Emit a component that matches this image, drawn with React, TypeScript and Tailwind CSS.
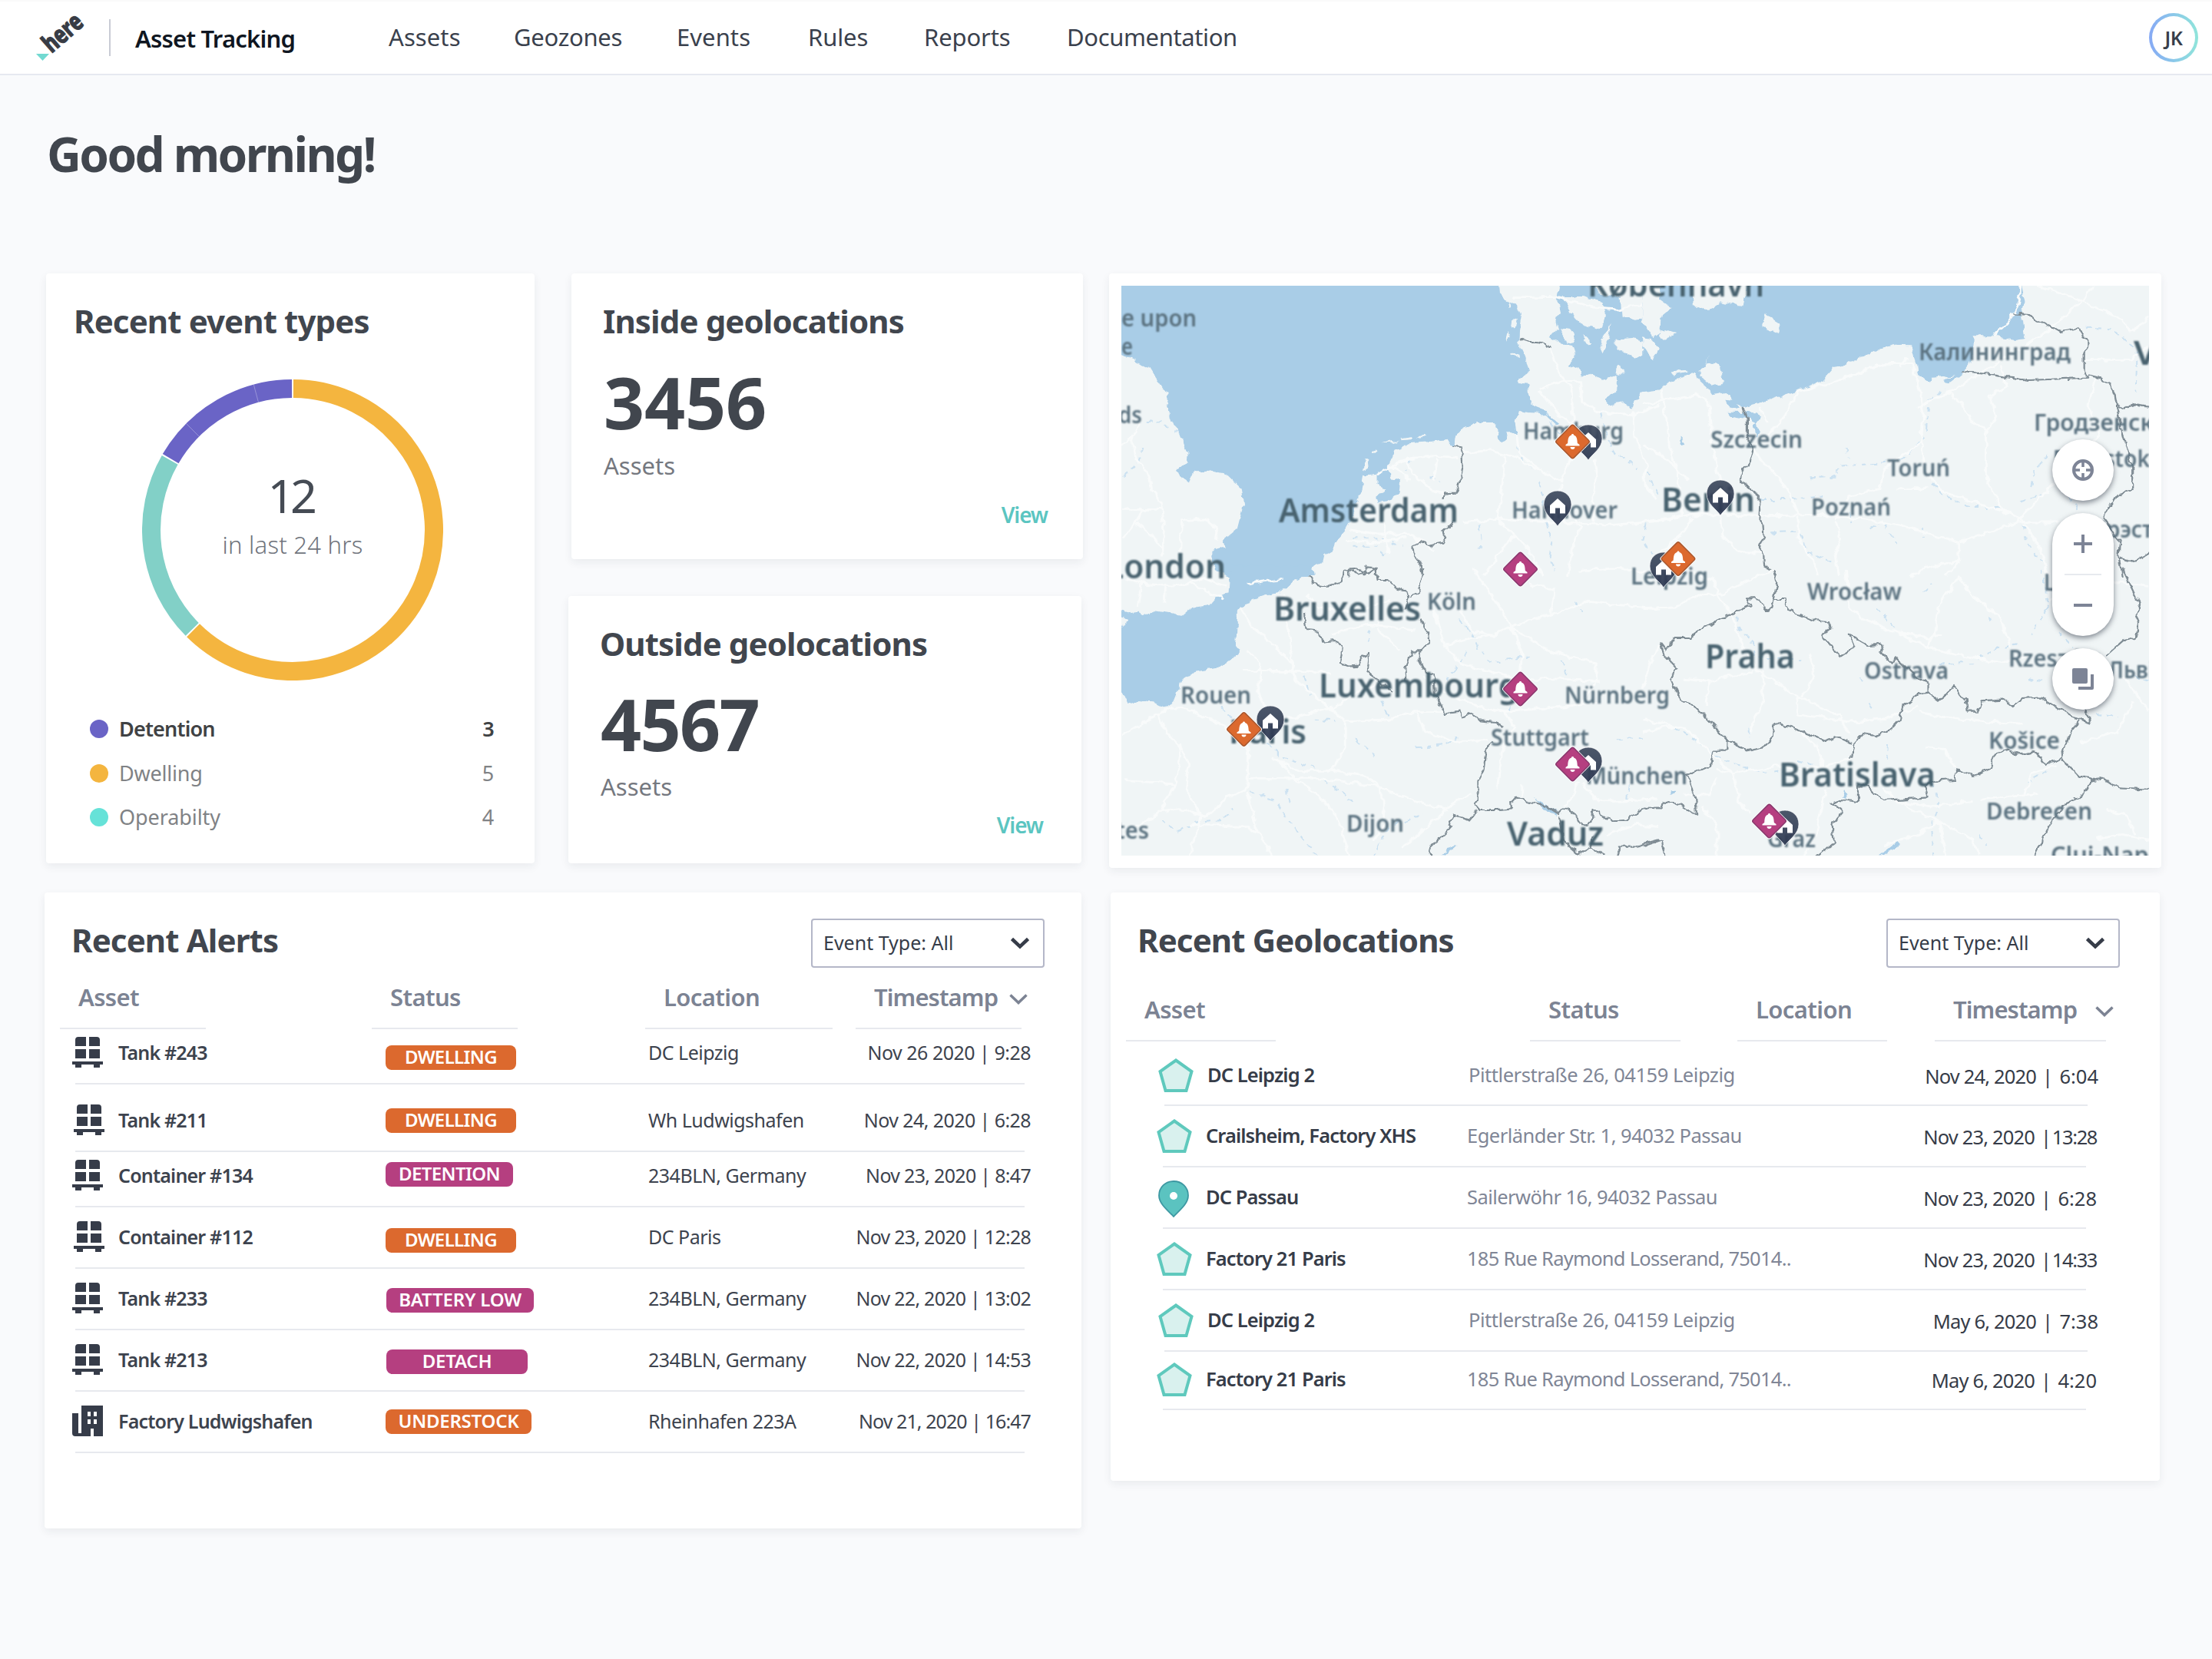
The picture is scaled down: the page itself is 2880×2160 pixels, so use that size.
import React from "react";

const NAV = [
  { label: "Assets", cell: "w-[163px] tracking-[0.003em]" },
  { label: "Geozones", cell: "w-[212px] tracking-[-0.009em]" },
  { label: "Events", cell: "w-[171px] tracking-[0.002em]" },
  { label: "Rules", cell: "w-[151px] tracking-[-0.004em]" },
  { label: "Reports", cell: "w-[186px] tracking-[-0.004em]" },
  { label: "Documentation", cell: "tracking-[-0.012em]" },
];

const EVENTS = [
  { label: "Detention", count: 3, dot: "bg-[#6a64c6]", text: "text-[#404244] font-semibold tracking-[-0.03em]" },
  { label: "Dwelling", count: 5, dot: "bg-[#f4b53f]", text: "text-[#808285] tracking-[-0.008em]" },
  { label: "Operabilty", count: 4, dot: "bg-[#66e2d8]", text: "text-[#808285] tracking-[-0.003em]" },
];

const ORANGE = "bg-[#dc692e]";
const MAGENTA = "bg-[#b53f80]";

const ALERTS = [
  { icon: "pallet", name: "Tank #243", status: "DWELLING", tone: ORANGE, badge: "w-[170px] mt-[11px] tracking-[-0.026em]", row: "h-[70px] pt-[10px]", place: "DC Leipzig", time: "Nov 26 2020 | 9:28", fit: "tracking-[-0.02em]" },
  { icon: "pallet", name: "Tank #211", status: "DWELLING", tone: ORANGE, badge: "w-[170px] mt-[5px] tracking-[-0.026em]", row: "h-[86px] pt-[26px]", place: "Wh Ludwigshafen", time: "Nov 24, 2020 | 6:28", fit: "tracking-[-0.023em]", shift: true },
  { icon: "pallet", name: "Container #134", status: "DETENTION", tone: MAGENTA, badge: "w-[166px] mt-[3px] tracking-[-0.026em]", row: "h-[70px] pt-[10px]", place: "234BLN, Germany", time: "Nov 23, 2020 | 8:47", fit: "tracking-[-0.028em]" },
  { icon: "pallet", name: "Container #112", status: "DWELLING", tone: ORANGE, badge: "w-[170px] mt-[9px] tracking-[-0.026em]", row: "h-[78px] pt-[18px]", place: "DC Paris", time: "Nov 23, 2020 | 12:28", fit: "tracking-[-0.03em]", shift: true },
  { icon: "pallet", name: "Tank #233", status: "BATTERY LOW", tone: MAGENTA, badge: "w-[192px] mt-[7px] ml-px tracking-[-0.008em]", row: "h-[78px] pt-[18px]", place: "234BLN, Germany", time: "Nov 22, 2020 | 13:02", fit: "tracking-[-0.03em]" },
  { icon: "pallet", name: "Tank #213", status: "DETACH", tone: MAGENTA, badge: "w-[184px] mt-[7px] ml-px tracking-[-0.01em]", row: "h-[78px] pt-[18px]", place: "234BLN, Germany", time: "Nov 22, 2020 | 14:53", fit: "tracking-[-0.03em]" },
  { icon: "factory", name: "Factory Ludwigshafen", status: "UNDERSTOCK", tone: ORANGE, badge: "w-[190px] mt-[5px] tracking-[-0.01em]", row: "h-[78px] pt-[18px]", place: "Rheinhafen 223A", time: "Nov 21, 2020 | 16:47", fit: "tracking-[-0.037em]" },
];

const PLACES = [
  { icon: "zone", name: "DC Leipzig 2", address: "Pittlerstraße 26, 04159 Leipzig", fit: "tracking-[-0.018em]", date: "Nov 24, 2020", time: "6:04", clock: "", row: "ml-0.5", inner: "h-[82px] pt-[23px]" },
  { icon: "zone", name: "Crailsheim, Factory XHS", address: "Egerländer Str. 1, 94032 Passau", fit: "tracking-[-0.02em]", date: "Nov 23, 2020", time: "13:28", clock: "tracking-[-0.055em]", row: "", inner: "h-[78px] pt-[18px]" },
  { icon: "pin", name: "DC Passau", address: "Sailerwöhr 16, 94032 Passau", fit: "tracking-[-0.022em]", date: "Nov 23, 2020", time: "6:28", clock: "", row: "", inner: "h-[78px] pt-[18px]" },
  { icon: "zone", name: "Factory 21 Paris", address: "185 Rue Raymond Losserand, 75014..", fit: "tracking-[-0.029em]", date: "Nov 23, 2020", time: "14:33", clock: "tracking-[-0.055em]", row: "", inner: "h-[78px] pt-[18px]" },
  { icon: "zone", name: "DC Leipzig 2", address: "Pittlerstraße 26, 04159 Leipzig", fit: "tracking-[-0.018em]", date: "May 6, 2020", time: "7:38", clock: "", row: "ml-0.5", inner: "h-[78px] pt-[18px]" },
  { icon: "zone", name: "Factory 21 Paris", address: "185 Rue Raymond Losserand, 75014..", fit: "tracking-[-0.029em]", date: "May 6, 2020", time: "4:20", clock: "", row: "", inner: "h-[74px] pt-[15px]" },
];

/* ---------- icons ---------- */

function Logo() {
  return (
    <svg className="h-[62px] w-[68px] overflow-visible" viewBox="0 0 68 62">
      <text
        transform="translate(21 52) rotate(-41)"
        fontFamily="Noto Sans"
        fontWeight="800"
        fontSize="33"
        textLength="58"
        lengthAdjust="spacingAndGlyphs"
        fill="#383c45"
        stroke="#383c45"
        strokeWidth="1.200"
      >
        here
      </text>
      <path d="M1 52h17l-8.500 9z" fill="#72d9d1" />
    </svg>
  );
}

function Chevron({ className, width }: { className: string; width: number }) {
  return (
    <svg className={className} viewBox="0 0 24 16" fill="none" stroke="currentColor" strokeWidth={width}>
      <path d="M1.500 2.500 12 12.500 22.500 2.500" />
    </svg>
  );
}

function PalletIcon() {
  return (
    <svg className="h-10 w-10" viewBox="0 0 40 40" fill="#363c49">
      <path d="M4 12V4a4 4 0 0 1 4-4h10v12zM22 0h10a4 4 0 0 1 4 4v8H22zM4 16h14v12H4zM22 16h14v12H22zM0 32h40v4h-4v4h-8v-4H12v4H4v-4H0z" />
    </svg>
  );
}

function FactoryIcon() {
  return (
    <svg className="h-10 w-10" viewBox="0 0 40 40" fill="#363c49">
      <path
        fillRule="evenodd"
        d="M0 10h8v26h4V0h28v40H28V30h-4v10H4a4 4 0 0 1-4-4zM20 8v6h4V8zM28 8v6h4V8zM20 18v6h4v-6zM28 18v6h4v-6z"
      />
    </svg>
  );
}

function ZoneIcon() {
  return (
    <svg className="h-[44px] w-[46px]" viewBox="0 0 46 44">
      <path d="M23 2.500 43.500 17 36.500 42h-27L2.500 17z" fill="#d9f1ee" stroke="#5fc9bd" strokeWidth="4" />
    </svg>
  );
}

function PlaceIcon() {
  return (
    <svg className="ml-[2px] h-[48px] w-[40px]" viewBox="0 0 40 48">
      <path d="M20 47C14 40 1 31 1 19.500 1 8.500 9.500 1 20 1s19 7.500 19 18.500C39 31 26 40 20 47z" fill="#5bc3c0" stroke="#3d98a2" strokeWidth="1.800" />
      <circle cx="20" cy="20" r="5" fill="#fff" />
    </svg>
  );
}

/* ---------- map ---------- */

const NW = "translate(-20 -22) scale(.45918 .33333)";
const NE = "translate(680 -22) scale(.44643 .33333)";
const SW = "translate(-20 368) scale(.45918 .33333)";
const SE = "translate(680 368) scale(.44643 .33333)";

const TILES = [
  {
    at: NW,
    sea: "M20 40 1112 40 1115 100 1135 125 1165 140 1178 180 1172 240 1170 285 1185 330 1200 385 1198 410 1170 430 1168 450 1195 455 1198 490 1205 530 1245 552 1262 580 1285 605 1278 612 1240 565 1205 562 1170 555 1160 600 1165 655 1148 640 1135 640 1140 665 1120 678 1110 655 1112 630 1100 600 1050 600 1005 625 992 660 990 690 978 690 970 665 920 675 860 682 820 710 803 760 808 820 832 825 825 880 800 910 770 915 765 890 795 860 770 845 770 800 740 805 730 800 725 860 716 900 700 970 680 1020 655 1060 640 1100 615 1120 610 1150 585 1165 590 1200 350 1200 320 1185 297 1140 297 1100 335 1085 330 1065 372 1015 390 920 385 860 340 800 300 788 250 790 235 835 205 810 200 790 230 755 232 725 208 640 190 605 170 520 178 487 160 465 125 390 70 355 44 340 20 335ZM1290 40 1280 105 1285 165 1275 200 1280 235 1258 270 1290 295 1320 300 1330 340 1308 375 1345 400 1350 420 1370 405 1410 435 1450 412 1450 465 1415 510 1425 530 1465 520 1490 545 1515 485 1570 475 1570 40Z",
    land: "M1295 108 1350 108 1410 130 1420 180 1400 235 1350 215 1320 170ZM1380 60 1395 95 1435 110 1460 105 1465 185 1500 200 1530 195 1540 240 1570 250 1570 60ZM1445 275 1490 270 1530 285 1570 260 1570 330 1500 350 1445 310ZM1432 215 1425 270 1408 325 1400 300ZM1285 235 1320 240 1335 285 1305 290ZM1450 380 1472 400 1460 415 1445 405ZM1355 262 1380 290 1372 298 1352 280ZM735 740 748 745 738 785 728 790ZM752 715 765 700 770 706 756 722ZM785 682 810 672 830 670 810 680ZM835 664 870 656 868 666 838 670ZM885 655 905 650 905 658 888 662ZM1155 195 1165 200 1160 235 1152 225ZM1140 240 1150 265 1135 290ZM1145 325 1170 335 1172 345 1150 335ZM1138 125 1150 150 1142 152Z",
    borders: "M1172 272 1200 285 1225 285 1250 305 1262 295M985 690 1008 695 1012 780 993 872 957 875 955 900M985 990 955 1030 965 1050 955 1070 915 1080 890 1068 870 1080 872 1115 890 1150 900 1200M688 1198 695 1175 715 1170 735 1190 740 1165 770 1170 765 1200",
    roads: "M44 690 75 650 95 600M70 650 85 740 120 800 130 860 155 910 165 1000 160 1120M50 940 155 940M50 1050 80 990 110 940M210 1110 215 980 280 975 315 1010 310 1060M85 990 130 1040 165 1110M1150 110 1280 110 1380 150 1450 160 1568 125M1255 300 1290 420 1320 470 1325 600M1230 470 1290 440 1345 440 1350 520 1400 560 1500 570 1568 530M1230 480 1290 580 1325 600M1325 720 1290 830 1220 780 1150 730 1085 710 1010 720M1165 650 1170 720 1230 780M1015 990 1110 975 1200 985 1290 990 1440 1000 1568 985M1290 840 1285 900 1345 1010 1320 1100 1310 1200M1385 740 1390 800 1380 900 1385 990M770 800 860 740 940 730 1000 740M850 740 870 800 920 860 960 880M940 740 930 830M800 765 845 800 860 830M1110 980 1160 1040 1110 1120 1070 1200M1160 1040 1200 1100 1240 1200M690 1020 770 1035 860 1035 930 1100M680 1060 760 1070 850 1050M1495 560 1500 660 1535 770 1520 820 1560 900M780 920 790 1030 800 1110M1130 730 1125 830 1110 980M1340 1180 1440 1170 1560 1190",
    rivers: "M115 600 160 598 190 630 208 635M1248 560 1265 620 1290 650M1165 700 1180 750 1215 780M50 810 90 760 105 690M1060 1000 1065 1080 1050 1100M1230 830 1240 890 1235 930M1250 990 1265 1060 1258 1120 1275 1180M1400 560 1415 640 1440 720 1510 775M1535 790 1550 850 1568 880M1530 1000 1520 1060 1550 1120M700 1050 780 1055 840 1080M700 1085 770 1085 800 1120M860 740 850 780M920 820 950 825",
  },
  {
    at: NE,
    sea: "M-4 40 1098 40 1112 130 1102 180 1112 270 1090 276 1030 262 960 262 960 345 940 380 925 412 890 448 878 435 905 418 842 428 835 440 800 408 780 298 735 296 680 315 650 335 610 360 560 380 515 445 450 475 365 512 290 540 270 530 240 480 200 490 185 460 160 430 152 408 100 430 75 440 45 475-4 478ZM245 560 330 562 338 580 330 605 300 585 255 575ZM238 512 262 515 280 545 255 550ZM330 600 340 640 330 660 322 610ZM105 655 120 680 112 685Z",
    land: "M-4 60 50 60 45 120 82 155 50 190 48 250 28 268-4 200ZM50 240 95 255 60 275 45 262ZM-4 265 20 270 45 310 25 360-4 300ZM355 178 400 215 392 252 345 228ZM140 60 145 140 190 158 225 130 290 145 305 60ZM190 340 185 370 225 375 235 440 200 455 165 420 165 395 185 382ZM80 400 125 395 130 405 90 415Z",
    borders: "M1078 175 1125 180 1140 200 1215 243 1268 232 1280 265 1300 285 1300 310 1285 330 1285 400 1295 425 1180 432 1120 435 1000 412 925 400M1295 412 1320 420 1360 455 1375 490 1380 540 1400 660 1425 770 1425 860 1375 895 1340 975 1390 1060 1385 1120 1395 1200M1380 530 1400 545 1440 530 1490 540M1390 1130 1435 1145 1490 1090M288 540 300 590 300 650 320 700 305 770 285 790 282 825 310 860 338 890 335 960 348 1000 350 1040 338 1085 350 1120 352 1160 378 1180 380 1200",
    roads: "M1100 50 1098 100 1090 150 1070 195 1020 262M1150 66 1280 125 1400 200 1420 250 1474 190M1310 66 1280 125 1200 220 1130 290 1050 350 890 485 800 540M0 530 50 515 155 495 190 520 200 700 225 850M50 480 70 610 75 700 100 790 110 960M0 690 75 750 130 830M0 990 130 960 220 960 400 965 520 960 640 980 740 1000 920 1070 1090 990 1210 990M450 480 400 600 320 700 350 760 420 860 450 960 450 1050 500 1150 510 1200M450 480 560 440 700 370 780 370 800 440 815 560 810 680 820 780 860 860 980 920 1060 950 1110 985M885 480 930 530 960 600 1000 630 1030 580 1010 500 1060 460 1040 380M1000 630 1000 820 1050 950M560 980 600 890 690 860 700 780 810 680M225 960 230 1040 280 1110 350 1110M140 970 110 1040 50 1110M920 1070 920 1140 880 1200M1110 1000 1160 1100 1180 1200M1090 985 1180 860 1280 720 1330 650 1295 530 1320 430M560 985 575 1050 560 1120 570 1200M1285 355 1420 355 1474 300M740 860 830 860M920 1140 820 1170 780 1200M360 600 340 540M750 380 770 350",
    rivers: "M485 820 560 815 570 770 700 760 760 740 800 680 820 660 830 520 880 470M590 700 595 740M840 840 870 880 950 930 1050 930M1100 910 1160 880M1110 1000 1115 1060 1150 1130 1180 1160M370 1030 450 1025 480 1100 550 1150M600 950 610 990M700 1000 740 1080M660 1015 690 990M1290 230 1370 235 1410 280 1440 320 1435 480M1180 730 1140 790 1130 860M1240 890 1270 940M810 1010 820 1050M340 900 420 900 520 890",
  },
  {
    at: SW,
    sea: "M590-10 575 20 520 60 490 95 450 110 380 145 372 165 372 220 368 300 380 320 355 355 310 390 250 405 210 440 208 475 195 520 165 545 130 520 90 515 60 528 40 470 20 460 20 232 40 232 65 205 40 190 20 190 20 165 40 165 65 175 95 170 100 185 135 165 180 175 215 185 245 150 300 140 310 120 350 95 352 40 350-10ZM1215 900 1280 950 1278 965 1240 940ZM985 1080 992 1085 960 1120 950 1120Z",
    land: "",
    borders: "M575 30 590 60 635 72 670 45 675 15 700 10 715 25 735 5 745 20 765 0 770 45 800 45 820 75 850 85 855 120 845 160M900 0 898 40 885 75 890 95 862 118M890 200 900 240 915 255 918 290 895 325 868 325 848 385 850 440M888 325 888 360 905 405 930 420 935 500 958 570 1000 560 1010 580 1040 565 1060 595 1105 600 1125 615M560 180 565 240 605 245 610 290 655 285 668 310 662 370 690 383 715 380 725 345 745 330 740 400 770 435 810 480M1095 680 1078 700 1070 790 1055 830 1055 880 1045 920 1060 945 1110 945 1150 940 1148 915 1165 890 1190 910 1250 930 1285 960 1300 940 1330 960 1350 1000 1375 990 1380 940 1435 985 1480 980 1520 940 1568 938M1050 945 1030 980 985 962 975 1000 980 1010 920 1090 922 1140M1285 970 1295 1060 1340 1115 1375 1090 1380 1050M1375 1090 1410 1115M1445 1140 1460 1085 1500 1085 1568 1060",
    roads: "M50 650 150 570 190 540 250 560 330 610 405 700 400 860 340 900 280 970 220 940 155 950 50 1040M150 570 170 640 210 700 200 830 155 950M210 690 235 760 225 860 270 970 250 1060 240 1122M380 150 410 220 460 280 520 360 540 440 640 550 680 600 680 700 640 790M400 320 440 370 430 480 460 560 440 680M390 400 440 400 560 400 640 410M680 600 800 590 880 560 950 560M470 740 540 790 640 790 730 810 790 860 870 910 960 940 1040 880M480 740 540 830 600 880 660 980 690 1122M405 820 600 820 780 850M400 870 430 1030 470 1122M240 1000 390 1010 430 1030M50 830 200 840M640 540 540 580 440 600M640 550 720 480 790 440M780 850 790 1000 760 1060M1000 150 1040 250 1110 260 1140 230 1260 180 1370 130 1568 160M1040 0 1100 120 1150 230 1180 330 1175 400M1150 230 1250 320 1390 370 1390 440 1340 540M930 160 960 300 1000 370 1080 400 1170 440 1250 430 1400 440M960 300 1050 270 1110 260M1200 60 1270 80 1260 180M1568 300 1540 380 1520 470M900 420 960 480 1060 540 1130 560 1300 540 1400 520M1130 560 1160 620 1120 720 1110 860M1340 830 1320 900 1300 930M1350 840 1400 910 1560 900M500 100 520 260 530 400M570 100 600 150 700 170 800 130M640 260 740 220 880 240M780 170 770 240 830 320M1180 850 1180 900M880 560 900 640 1000 680 1080 670M970 940 900 1020 840 1090M400 60 500 40M60 40 100 60 90 150M100 60 200 70 280 40 340 70M170 60 165 140M240 60 330 120M1420 1040 1500 1000 1568 1010",
    rivers: "M330 540 370 610 440 660 500 740 600 780M560 420 580 500M740 290 750 240M780 520 800 580M1000 200 1040 260 1060 320 1090 370 1130 360 1210 340M1020 320 990 400 960 440M710 670 760 730M880 700 960 690 1000 660M410 870 480 910 560 1060 600 1122M160 980 200 1030 260 990 330 980 360 940M510 860 520 920M800 1010 760 1122M820 1000 900 960M1330 130 1350 170M1290 360 1310 420M1480 850 1475 900M590 590 650 595M1450 670 1530 665M620 830 700 910M1150 500 1140 580",
  },
  {
    at: SE,
    sea: "M590 865 597 880 588 900 582 895ZM740 1068 748 1080 700 1120 685 1120ZM75 868 95 870 80 885Z",
    land: "",
    borders: "M378 0 388 60 375 155 380 120 410 120 425 165 500 205 540 210 545 240 522 265 575 345 615 310 600 260 655 300 700 295 690 330 720 370 740 355 800 430 830 450 830 485 800 490 755 540 745 595 720 630 680 655 640 645 610 690 605 740M375 155 360 165 330 115 300 115 310 145 240 190 200 215 150 255 135 270 90 270 65 320 48 290 60 340 95 390 80 430 105 510 150 540 200 610 245 670 270 690 300 715 350 700 380 655 385 605 450 630 530 675 560 655 605 680M245 665 245 710 205 710 195 770 125 810 150 890 155 965 125 935 90 915 55 910 50 940 0 938M830 485 860 515 905 465 940 515 945 560 970 560 985 520 1050 515 1075 540 1100 510 1160 505 1200 540 1270 590 1305 605 1285 550M1270 595 1245 640 1220 740 1170 765 1140 715 1100 730 1060 710 1030 720 1010 780 960 810 915 790 905 825 850 830 820 850 830 895 710 905 680 890 650 850 625 850 625 915 570 905 550 915 580 950 550 1000 555 1075 500 1135M1220 745 1270 815 1305 825 1280 890 1230 920 1190 990 1135 1140M1305 830 1340 820 1380 855 1490 865M1395 0 1450 155 1435 180 1445 215 1435 270 1400 280 1345 345M0 1085 55 1060 68 1140",
    roads: "M0 155 90 150 160 105 230 100 300 50 380 0M220 110 260 190 280 280 330 400 390 450 450 500 570 575 600 650M350 400 345 530 310 640M320 400 190 440 120 430M190 440 180 540M450 500 450 570 600 600 700 590 800 540M590 0 600 150 640 200 740 250 830 310 940 345 1040 370 1130 340M920 30 860 150 850 260 820 310M740 250 830 270 870 260M920 30 960 110 1040 190 1070 310M800 560 870 580 1000 600 1110 610M0 590 120 625 180 700 260 800 280 910 310 960M260 800 400 770 470 790 560 760 605 740M210 780 260 800M120 885 195 885 210 820M170 930 215 1010 215 1122M530 870 500 1050 470 1122M700 860 740 910 860 990 960 1060 980 1122M740 910 840 930 960 910M860 990 880 1122M860 990 800 1040 700 1080M980 905 1060 890 1150 880M820 700 880 710 910 780M1110 880 1130 800 1200 770M1280 0 1240 60 1180 130M1474 70 1400 60 1300 20M1400 420 1474 560M1430 520 1380 640 1270 680M1320 1060 1390 1040 1474 1060M1350 940 1410 970 1430 1040M480 330 500 420 460 500M0 640 60 620 110 620M440 620 510 700 520 780M110 0 200 40 220 110",
    rivers: "M270 190 280 240 320 290 325 350 460 355M680 160 730 230M630 430 640 450M655 530 670 555M90 625 150 670 220 740 300 780 360 800 410 790M450 750 500 770M710 690 705 760M840 840 860 910 840 1000 845 1122M860 370 960 370 1030 310 1090 295M1160 0 1180 150 1130 260M1120 430 1170 440M1115 840 1180 790M1320 570 1380 580M980 1040 1000 1080M815 90 840 60M1010 190 1015 220M1210 250 1255 310M1430 420 1470 440M305 620 310 660",
  },
];

type Label = [text: string, x: number, y: number, width: number, big?: boolean];

const LABELS: Label[] = [
  ["e upon", 0, 53, 98],
  ["e", 0, 90, 15],
  ["ds", -4, 179, 31],
  ["Hamburg", 523, 200, 131],
  ["Amsterdam", 205, 308, 234, true],
  ["Hannover", 508, 303, 138],
  ["London", -20, 381, 156, true],
  ["København", 607, 14, 230, true],
  ["Калининград", 1038, 97, 198],
  ["V", 1318, 103, 30, true],
  ["Szczecin", 767, 211, 120],
  ["Гродзенск", 1188, 189, 156],
  ["Białystok", 1213, 236, 126],
  ["Toruń", 997, 248, 82],
  ["Berlin", 703, 294, 122, true],
  ["Poznań", 898, 299, 104],
  ["Брэст", 1265, 328, 78],
  ["Leipzig", 663, 389, 101],
  ["Köln", 398, 422, 64],
  ["Bruxelles", 198, 436, 192, true],
  ["Wrocław", 893, 409, 123],
  ["Lublin", 1201, 397, 82],
  ["Luxembourg", 257, 536, 260, true],
  ["Rouen", 77, 544, 92],
  ["Nürnberg", 577, 544, 137],
  ["Praha", 760, 498, 117, true],
  ["Ostrava", 967, 512, 110],
  ["Rzeszów", 1155, 496, 119],
  ["Львів", 1285, 511, 76],
  ["Paris", 140, 596, 101, true],
  ["Stuttgart", 481, 599, 128],
  ["München", 605, 649, 132],
  ["Košice", 1129, 603, 93],
  ["Bratislava", 856, 652, 204, true],
  ["Debrecen", 1126, 695, 138],
  ["Dijon", 293, 711, 75],
  ["tes", -7, 720, 43],
  ["Vaduz", 502, 729, 126, true],
  ["Graz", 841, 731, 63],
  ["Cluj-Napoca", 1210, 752, 180],
];

const PINS: [number, number][] = [
  [608, 181], [568, 267], [780, 253], [706, 347], [194, 547], [608, 601], [864, 683],
];

const DIAMONDS: [number, number, boolean][] = [
  [587.5, 203, true], [725, 355.500, true], [159.500, 577.500, true],
  [519.500, 369, false], [519.500, 525, false], [587.500, 623, false], [843.500, 697, false],
];

function EuropeMap() {
  return (
    <svg className="block h-[742px] w-[1338px] bg-[#f0f5f6]" viewBox="0 0 1338 742">
      <defs>
        <filter id="rough" x="0" y="0" width="1338" height="742" filterUnits="userSpaceOnUse">
          <feTurbulence type="fractalNoise" baseFrequency=".09" numOctaves="2" seed="4" result="noise" />
          <feDisplacementMap in="SourceGraphic" in2="noise" scale="9" xChannelSelector="R" yChannelSelector="G" />
          <feGaussianBlur stdDeviation=".7" />
        </filter>
        <linearGradient id="pin" x1="0" y1="0" x2="0" y2="1">
          <stop offset="0" stopColor="#3f4a5e" />
          <stop offset="1" stopColor="#2b3650" />
        </linearGradient>
      </defs>
      <g filter="url(#rough)" fill="none" strokeLinejoin="round">
        {TILES.map((t) => (
          <g key={t.at} transform={t.at}>
            <path d={t.sea} fill="#a9cde7" />
            <path d={t.land} fill="#f0f5f6" />
            <path d={t.rivers} stroke="#cbe1f1" strokeWidth="2" strokeDasharray="7 6" vectorEffect="non-scaling-stroke" />
            <path d={t.roads} stroke="#f9fbfb" strokeWidth="2.800" vectorEffect="non-scaling-stroke" />
            <path d={t.borders} stroke="#7f8c94" strokeWidth="2.200" vectorEffect="non-scaling-stroke" />
          </g>
        ))}
      </g>
      <g className="blur-[0.8px]">
        {LABELS.map(([text, x, y, width, big]) => (
          <text
            key={text}
            x={x}
            y={y}
            textLength={width}
            lengthAdjust="spacingAndGlyphs"
            fontFamily="Noto Sans"
            fontWeight="600"
            fontSize={big ? 44 : 31}
            fill={big ? "#48626f" : "#5c7381"}
          >
            {text}
          </text>
        ))}
      </g>
      {PINS.map(([x, y]) => (
        <g key={`${x}-${y}`} transform={`translate(${x} ${y})`}>
          <path d="M0 46C-5 38-18 31-18 18-18 7-10 0 0 0S18 7 18 18C18 31 5 38 0 46z" fill="url(#pin)" fillOpacity=".93" stroke="#fff" strokeOpacity=".7" />
          <path d="M0 10 10 19V29.500H3V22.500H-3V29.500H-10V19z" fill="#fff" />
        </g>
      ))}
      {DIAMONDS.map(([x, y, orange]) => (
        <g key={`${x}-${y}`} transform={`translate(${x} ${y})`}>
          <rect x="-17.500" y="-17.500" width="35" height="35" rx="3" transform="rotate(45)" fill="#fff" />
          <rect x="-16" y="-16" width="32" height="32" rx="2.500" transform="rotate(45)" fill={orange ? "#dc692e" : "#b53f80"} stroke={orange ? "#a8582f" : "#87386c"} strokeWidth="1.500" />
          <path d="M0-10c1 0 1.500.5 1.500 1.500C5-7.500 6-4.500 6.300 2L9 4v1.500H-9V4l2.700-2C-6-4.500-5-7.500-1.500-8.500-1.500-9.500-1-10 0-10zM-3 7h6c0 1.700-1.200 3-3 3s-3-1.300-3-3z" fill="#fff" />
        </g>
      ))}
    </svg>
  );
}

const CONTROL = "flex items-center justify-center bg-white text-[#7d8496] shadow-[0_3px_7px_rgba(20,30,45,0.5)]";

function MapControls() {
  return (
    <div className="absolute top-[200px] right-[46px] flex flex-col gap-4">
      <button className={`${CONTROL} size-20 rounded-full`}>
        <svg className="size-7" viewBox="0 0 28 28" fill="none" stroke="currentColor" strokeWidth="4">
          <circle cx="14" cy="14" r="12" />
          <path d="M14 2v8M14 18v8M2 14h8M18 14h8" strokeWidth="3.500" />
        </svg>
      </button>
      <div className={`${CONTROL} h-40 w-20 flex-col rounded-full`}>
        <button className="flex h-20 items-center justify-center">
          <svg className="size-6" viewBox="0 0 24 24" stroke="currentColor" strokeWidth="4">
            <path d="M12 0v24M0 12h24" />
          </svg>
        </button>
        <span className="-my-px h-0.5 w-12 bg-[#e7eaee]" />
        <button className="flex h-20 items-center justify-center">
          <svg className="size-6" viewBox="0 0 24 24" stroke="currentColor" strokeWidth="4">
            <path d="M0 12h24" />
          </svg>
        </button>
      </div>
      <button className={`${CONTROL} size-20 rounded-full`}>
        <svg className="size-7" viewBox="0 0 28 28" fill="currentColor">
          <rect width="20" height="20" rx="2" />
          <path d="M24 8h4v18a2 2 0 0 1-2 2H8v-4h16z" />
        </svg>
      </button>
    </div>
  );
}

/* ---------- cards ---------- */

const CARD = "rounded bg-white shadow-[0_4px_12px_rgba(30,40,60,0.07)]";
const TITLE = "text-[42px] leading-[56px] font-bold tracking-[-0.021em] whitespace-nowrap text-[#41464e]";
const FIGURE = "text-[93px] leading-[100px] font-bold text-[#41464e]";
const VIEW = "self-end text-[28px] leading-10 font-semibold tracking-[-0.04em] text-[#5bc5c1]";

function Donut() {
  const arc = (from: number, to: number) => {
    const p = (a: number) => {
      const r = (a * Math.PI) / 180;
      return `${(196 + 184 * Math.sin(r)).toFixed(2)} ${(196 - 184 * Math.cos(r)).toFixed(2)}`;
    };
    return `M${p(from)}A184 184 0 ${to - from > 180 ? 1 : 0} 1 ${p(to)}`;
  };
  return (
    <div className="relative mt-[48px] ml-[125px] size-[392px]">
      <svg className="size-[392px]" viewBox="0 0 392 392" fill="none" strokeWidth="24">
        <path d={arc(0.3, 224.700)} stroke="#f4b53f" />
        <path d={arc(225.300, 299.700)} stroke="#82d0c7" />
        <path d={arc(300.300, 359.700)} stroke="#6a64c6" />
        <path d="m57.400 57.400 17 17M145.300 6.700l6.200 23.200" stroke="#fff" strokeOpacity=".3" strokeWidth="1" />
      </svg>
      <div className="absolute inset-0 flex flex-col items-center pt-[121px]">
        <span className="mr-[6px] text-[61px] leading-[60px] tracking-[-0.09em] text-[#454b54]">12</span>
        <span className="mt-[14px] text-[31px] leading-10 font-light tracking-[0.008em] text-[#70747c]">in last 24 hrs</span>
      </div>
    </div>
  );
}

function EventTypes() {
  return (
    <section className={`${CARD} ml-0.5 h-[768px] w-[636px] pt-[34px]`}>
      <h2 className={`${TITLE} ml-[36px]`}>Recent event types</h2>
      <Donut />
      <ul className="mt-[43px] mr-[53px] ml-[57px] flex flex-col gap-[17.500px]">
        {EVENTS.map((e) => (
          <li key={e.label} className={`${e.text} flex h-10 items-center text-[27px] leading-10`}>
            <span className={`${e.dot} size-6 rounded-full`} />
            <span className="ml-[14px]">{e.label}</span>
            <span className="ml-auto">{e.count}</span>
          </li>
        ))}
      </ul>
    </section>
  );
}

function Select({ className }: { className: string }) {
  return (
    <button className={`${className} flex h-16 w-[304px] items-center justify-between rounded-sm border-2 border-[#b4b7c8] pr-[18px] pl-[14px] text-[#363c48]`}>
      <span className="mb-0.5 text-[25px] leading-10">Event Type: All</span>
      <Chevron className="h-4 w-6" width={4.500} />
    </button>
  );
}

function HeadCell({ className, children }: { className: string; children: React.ReactNode }) {
  return (
    <div className={`${className} flex h-[61px] border-b-2 border-[#e7e9ee] pl-6 text-[31px] leading-[39px] font-semibold tracking-[-0.02em] text-[#7c8393]`}>
      {children}
    </div>
  );
}

function AlertsCard() {
  return (
    <section className={`${CARD} mt-[38px] h-[828px] w-[1350px] pt-[34px]`}>
      <div className="flex">
        <h2 className={`${TITLE} ml-[35px]`}>Recent Alerts</h2>
        <Select className="mr-[48px] ml-auto" />
      </div>
      <div className="mt-[19px] flex">
        <HeadCell className="ml-5 w-[190px]">Asset</HeadCell>
        <HeadCell className="ml-[216px] w-[190px]">Status</HeadCell>
        <HeadCell className="ml-[166px] w-[244px]">Location</HeadCell>
        <HeadCell className="ml-[30px] w-[216px]">
          <span className="w-[176px] shrink-0 tracking-[-0.03em]">Timestamp</span>
          <Chevron className="mt-[14px] h-4 w-6 shrink-0" width={3.500} />
        </HeadCell>
      </div>
      {ALERTS.map((a) => (
        <div key={a.name} className="ml-9 w-[1248px] text-[25px] leading-10 whitespace-nowrap text-[#3d434e]">
          <div className={`${a.row} flex`}>
            <div className={`w-[60px] ${a.shift ? "pl-0.5" : ""}`}>
              {a.icon === "pallet" ? <PalletIcon /> : <FactoryIcon />}
            </div>
            <div className="w-[348px] font-semibold tracking-[-0.032em]">{a.name}</div>
            <div className="w-[342px]">
              <div className={`${a.badge} ${a.tone} h-8 rounded-lg text-center text-[24px] leading-[30px] font-semibold text-white`}>
                {a.status}
              </div>
            </div>
            <div className="tracking-[-0.02em]">{a.place}</div>
            <div className={`${a.fit} ml-auto`}>{a.time}</div>
          </div>
          <div className="ml-1 h-0.5 w-[1236px] bg-[#e7e9ee]" />
        </div>
      ))}
    </section>
  );
}

function GeolocationsCard() {
  return (
    <section className={`${CARD} mt-8 ml-0.5 h-[766px] w-[1366px] pt-[34px]`}>
      <div className="flex">
        <h2 className={`${TITLE} ml-[35px]`}>Recent Geolocations</h2>
        <Select className="mr-[52px] ml-auto" />
      </div>
      <div className="mt-[35px] flex">
        <HeadCell className="ml-5 w-[195px]">Asset</HeadCell>
        <HeadCell className="ml-[331px] w-[196px]">Status</HeadCell>
        <HeadCell className="ml-[74px] w-[195px]">Location</HeadCell>
        <HeadCell className="ml-[62px] w-[223px]">
          <span className="w-[184px] shrink-0 tracking-[-0.03em]">Timestamp</span>
          <Chevron className="mt-[14px] ml-px h-4 w-6 shrink-0" width={3.500} />
        </HeadCell>
      </div>
      {PLACES.map((p, i) => (
        <div key={i} className="ml-[60px] w-[1226px] text-[25.500px] leading-10 whitespace-nowrap text-[#363c48]">
          <div className={p.row}>
            <div className={`${p.inner} flex w-[1224px]`}>
              <div className="-mt-px w-16">{p.icon === "zone" ? <ZoneIcon /> : <PlaceIcon />}</div>
              <div className="w-[340px] font-semibold tracking-[-0.036em]">{p.name}</div>
              <div className={`${p.fit} text-[#808696]`}>{p.address}</div>
              <div className="mt-0.5 ml-auto flex">
                <span className="tracking-[-0.033em]">{p.date}</span>
                <span className="ml-[5px] w-5 text-center">|</span>
                <span className={`${p.clock} flex w-14 justify-end`}>{p.time}</span>
              </div>
            </div>
            <div className="ml-2 h-0.5 w-[1202px] bg-[#e7e9ee]" />
          </div>
        </div>
      ))}
    </section>
  );
}

export default function App() {
  return (
    <div className="flex h-[2160px] w-[2880px] flex-col overflow-hidden bg-[#f9fafc] font-['Noto_Sans',sans-serif]">
      <header className="flex h-[98px] items-center border-t-2 border-b-2 border-t-[#fafafa] border-b-[#e6e9f0] bg-white">
        <div className="ml-[46px]"><Logo /></div>
        <span className="ml-[28px] h-12 w-0.5 bg-[#c9ccd5]" />
        <span className="mt-0.5 ml-8 w-[330px] text-[31px] leading-10 font-semibold tracking-[-0.025em] whitespace-nowrap text-[#0f1621]">Asset Tracking</span>
        <nav className="mb-0.5 flex text-[31px] leading-10 text-[#3a414d]">
          {NAV.map((n) => (
            <a key={n.label} className={n.cell}>{n.label}</a>
          ))}
        </nav>
        <div className="mr-[18px] ml-auto size-16 rounded-full bg-linear-to-r from-[#86a9f5] to-[#90e5da] p-1">
          <div className="flex size-14 items-center justify-center rounded-full bg-white pt-0.5 text-[25px] font-semibold tracking-[-0.02em] text-[#383e4a]">JK</div>
        </div>
      </header>

      <h1 className="mt-[62px] ml-[61px] text-[62px] leading-[80px] font-bold tracking-[-0.042em] whitespace-nowrap text-[#41464e]">Good morning!</h1>

      <main className="mt-[116px] ml-[58px] flex">
        <div className="w-[1352px]">
          <div className="flex">
            <EventTypes />
            <div className="ml-[44px] w-[670px]">
              <section className={`${CARD} ml-1 flex h-[372px] w-[666px] flex-col items-start pt-[34px] pl-[41px]`}>
                <h2 className={TITLE}>Inside geolocations</h2>
                <p className={`${FIGURE} mt-[27px] ml-px tracking-[-0.002em]`}>3456</p>
                <p className="mt-[13px] ml-px text-[31px] leading-10 text-[#75787f]">Assets</p>
                <a className={`${VIEW} mt-[24px] mr-[46px]`}>View</a>
              </section>
              <section className={`${CARD} mt-12 flex h-[348px] w-[668px] flex-col items-start pt-[34px] pl-[41px]`}>
                <h2 className={TITLE}>Outside geolocations</h2>
                <p className={`${FIGURE} mt-[26px] ml-px tracking-[-0.018em]`}>4567</p>
                <p className="mt-[12px] ml-px text-[31px] leading-10 text-[#75787f]">Assets</p>
                <a className={`${VIEW} mt-[10px] mr-[50px]`}>View</a>
              </section>
            </div>
          </div>
          <AlertsCard />
        </div>
        <div className="ml-[34px]">
          <section className={`${CARD} h-[774px] w-[1370px] p-4`}>
            <div className="relative h-[742px] w-[1338px] overflow-hidden">
              <EuropeMap />
              <MapControls />
            </div>
          </section>
          <GeolocationsCard />
        </div>
      </main>
    </div>
  );
}
